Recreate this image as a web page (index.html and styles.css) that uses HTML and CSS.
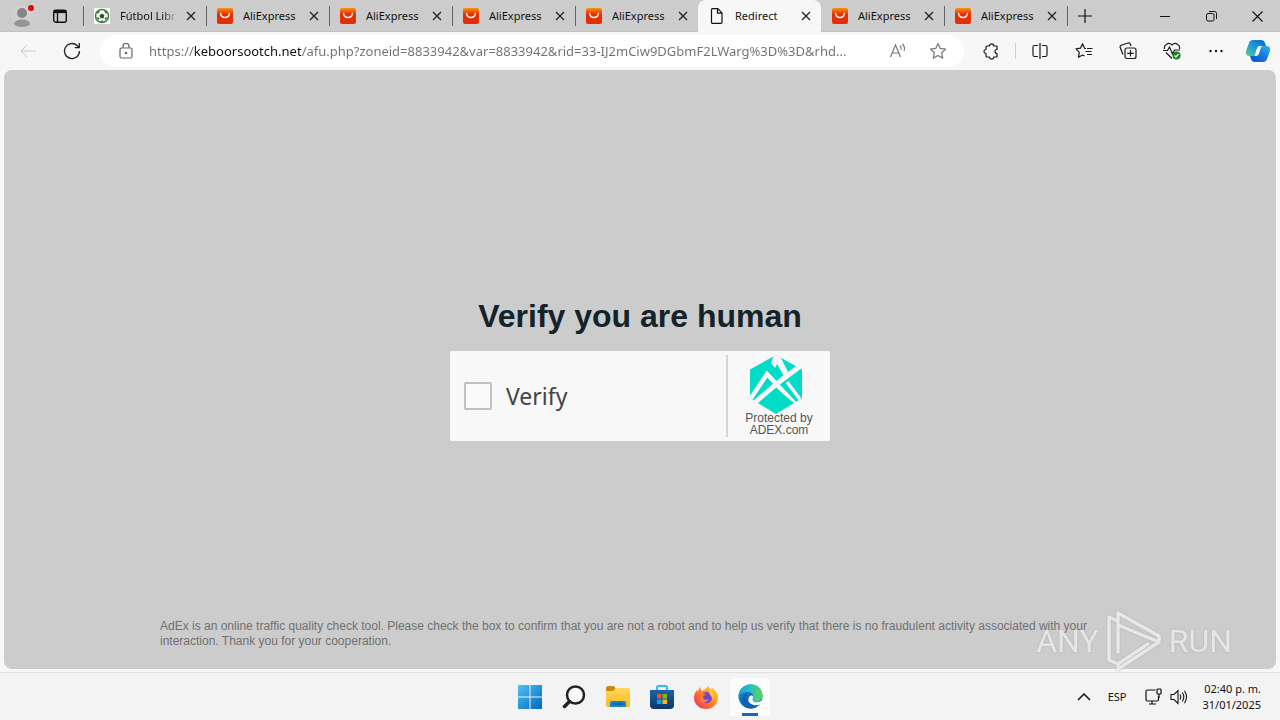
FILE: index.html
```html
<!DOCTYPE html>
<html lang="en">
<head>
<meta charset="utf-8">
<title>Redirect</title>
<link rel="stylesheet" href="styles.css">
</head>
<body>
<svg class="defs" aria-hidden="true">
  <defs>
    <linearGradient id="aliTop" x1="0" y1="0" x2="0" y2="1"><stop offset="0" stop-color="#f5960f"/><stop offset=".25" stop-color="#f0500a"/><stop offset=".4" stop-color="#e62e04"/></linearGradient>
    <linearGradient id="win" x1="0" y1="0" x2="1" y2="1"><stop offset="0" stop-color="#4fc3f5"/><stop offset="1" stop-color="#0067c0"/></linearGradient>
    <linearGradient id="folder" x1="0" y1="0" x2="0" y2="1"><stop offset="0" stop-color="#ffd75e"/><stop offset="1" stop-color="#f8b91c"/></linearGradient>
    <linearGradient id="store" x1="0" y1="0" x2="0" y2="1"><stop offset="0" stop-color="#1766a8"/><stop offset="1" stop-color="#0d3568"/></linearGradient>
    <linearGradient id="fox" x1="1" y1="0" x2="0" y2="1"><stop offset="0" stop-color="#ffe03a"/><stop offset=".45" stop-color="#ff8a1e"/><stop offset="1" stop-color="#f0246a"/></linearGradient>
    <linearGradient id="edgeTop" x1="0" y1="0" x2="1" y2="0"><stop offset="0" stop-color="#1b9de2"/><stop offset=".5" stop-color="#2bbfc4"/><stop offset="1" stop-color="#62d84e"/></linearGradient>
    <linearGradient id="edgeLow" x1="0" y1="0" x2="1" y2="1"><stop offset="0" stop-color="#1a8fdc"/><stop offset="1" stop-color="#0b4a8f"/></linearGradient>
    <linearGradient id="copA" x1="1" y1="0" x2="0" y2="1"><stop offset="0" stop-color="#0c5fc4"/><stop offset=".45" stop-color="#1b93e0"/><stop offset="1" stop-color="#4ed08c"/></linearGradient>
    <linearGradient id="copB" x1="1" y1="0" x2="0" y2="1"><stop offset="0" stop-color="#2fb4f0"/><stop offset=".5" stop-color="#1577e0"/><stop offset="1" stop-color="#0a4fc4"/></linearGradient>
    <symbol id="ali" viewBox="0 0 16 16"><rect width="16" height="16" rx="2" fill="url(#aliTop)"/><path d="M3.600 5.400c.6 5.400 8.200 5.400 8.800 0" fill="none" stroke="#fff" stroke-width="1.400" stroke-linecap="round"/></symbol>
    <symbol id="x" viewBox="0 0 10 10"><path d="M1 1l8 8M9 1L1 9" fill="none" stroke="#222" stroke-width="1.300"/></symbol>
  </defs>
</svg>

<header class="tabstrip">
  <button class="strip-btn profile" aria-label="Profile"><svg width="28" height="28" viewBox="0 0 28 28"><circle cx="14" cy="14" r="11" fill="#d1cfcf"/><circle cx="14" cy="11" r="5" fill="#858585"/><path d="M6 22c0-6 16-6 16 0-2 4-14 4-16 0z" fill="#969696"/><circle cx="23" cy="6" r="3" fill="#d90b0b"/></svg></button>
  <button class="strip-btn workspace" aria-label="Tab actions"><svg width="16" height="16" viewBox="0 0 16 16" fill="none" stroke="#111" stroke-width="1.400"><rect x="1.700" y="2.200" width="12.600" height="12" rx="2"/><path d="M2 3.800h12" stroke-width="2.600"/><path d="M5.500 5v9"/></svg></button>
  <nav class="tabs" aria-label="Tabs">
    <div class="tab"><svg class="fav" viewBox="0 0 16 16"><path fill="#f7fff2" d="M0 0h16v16H0z"/><circle cx="8" cy="8" r="6.500" fill="#fff" stroke="#3c8b35" stroke-width="1.600"/><path d="M8 5.500l2.500 1.800-.9 2.900H6.400l-.9-2.900zM3 4l3-1-2 3zM13 4l-3-1 2 3zM2.500 9l2 3 1-2zM13.500 9l-2 3-1-2zM6.500 14h3L8 12z" fill="#344b32"/></svg><a href="#" class="title fade">Fútbol Libr</a><button class="close" aria-label="Close tab"><svg width="10" height="10"><use href="#x"/></svg></button></div>
    <div class="tab"><svg class="fav"><use href="#ali"/></svg><a href="#" class="title">AliExpress</a><button class="close" aria-label="Close tab"><svg width="10" height="10"><use href="#x"/></svg></button></div>
    <div class="tab"><svg class="fav"><use href="#ali"/></svg><a href="#" class="title">AliExpress</a><button class="close" aria-label="Close tab"><svg width="10" height="10"><use href="#x"/></svg></button></div>
    <div class="tab"><svg class="fav"><use href="#ali"/></svg><a href="#" class="title">AliExpress</a><button class="close" aria-label="Close tab"><svg width="10" height="10"><use href="#x"/></svg></button></div>
    <div class="tab"><svg class="fav"><use href="#ali"/></svg><a href="#" class="title">AliExpress</a><button class="close" aria-label="Close tab"><svg width="10" height="10"><use href="#x"/></svg></button></div>
    <div class="tab active"><svg class="fav" viewBox="0 0 16 16"><path d="M3.500.7h5.300l4.200 4.200v9.400q0 1-1 1H3.500q-1 0-1-1V1.700q0-1 1-1zM8.500 1v4.200H13" fill="none" stroke="#111" stroke-width="1.200"/></svg><a href="#" class="title">Redirect</a><button class="close" aria-label="Close tab"><svg width="10" height="10"><use href="#x"/></svg></button></div>
    <div class="tab after"><svg class="fav"><use href="#ali"/></svg><a href="#" class="title">AliExpress</a><button class="close" aria-label="Close tab"><svg width="10" height="10"><use href="#x"/></svg></button></div>
    <div class="tab"><svg class="fav"><use href="#ali"/></svg><a href="#" class="title">AliExpress</a><button class="close" aria-label="Close tab"><svg width="10" height="10"><use href="#x"/></svg></button></div>
    <button class="newtab" aria-label="New tab"><svg width="14" height="14" viewBox="0 0 14 14"><path d="M7 0v14M0 7h14" stroke="#111" stroke-width="1.200"/></svg></button>
  </nav>
  <div class="window-btns">
    <button aria-label="Minimize"><svg width="10" height="10"><path d="M0 5.500h10" stroke="#111"/></svg></button>
    <button aria-label="Restore"><svg width="11" height="11" fill="none" stroke="#111"><rect x=".5" y="2.500" width="7.500" height="7.500" rx="1.500"/><path d="M3 .5h5.500q2 0 2 2V8"/></svg></button>
    <button aria-label="Close"><svg width="11" height="11"><path d="M.5.500l10 10M10.500.5l-10 10" stroke="#111" stroke-width="1.100"/></svg></button>
  </div>
</header>

<div class="toolbar">
  <button aria-label="Back"><svg width="16" height="14" viewBox="0 0 16 14" fill="none" stroke="#c8c8c8"><path d="M16 7H1M7 1L1 7l6 6"/></svg></button>
  <button aria-label="Refresh"><svg width="18" height="18" viewBox="0 0 18 18" fill="none" stroke="#222" stroke-width="1.300"><path d="M16.500 9A7.500 7.500 0 1 1 14.300 3.700L16 5.500M16.300 1v4.700h-4.600"/></svg></button>
  <form class="address">
    <svg width="14" height="17" viewBox="0 0 14 17" fill="none" stroke="#666" stroke-width="1.200"><rect x="1" y="5" width="12" height="10" rx="1.500"/><path d="M4 5V3.500a3 3 0 0 1 6 0V5"/><circle cx="7" cy="10" r=".7" fill="#666"/></svg>
    <input type="text" aria-label="Address" value="https://keboorsootch.net/afu.php?zoneid=8833942&amp;var=8833942&amp;rid=33-IJ2mCiw9DGbmF2LWarg%3D%3D&amp;rhd...">
    <button type="button" aria-label="Read aloud"><svg width="18" height="16" viewBox="0 0 18 16" fill="none" stroke="#777" stroke-width="1.200"><path d="M1.500 14L6.500 2l5 12M3.300 10h6.400M11 2.500q2 2 1 4.500M13.500 1q3 3.200 1.500 7"/></svg></button>
    <button type="button" aria-label="Add to favorites"><svg width="18" height="18" viewBox="0 0 18 18" fill="none" stroke="#777" stroke-width="1.200" stroke-linejoin="round"><path d="M9 1.500l2.300 4.900 5.300.7-3.900 3.700 1 5.300L9 13.500l-4.700 2.600 1-5.300L1.400 7.100l5.300-.7z"/></svg></button>
  </form>
  <button aria-label="Extensions"><svg width="17" height="17" viewBox="0 0 17 17" fill="none" stroke="#1a1a1a" stroke-width="1.200" stroke-linejoin="round"><path d="M4 3h2.500a2.100 2.100 0 0 1 4.200 0H14v3.500a2 2 0 1 0 0 4V14h-3.300a2.100 2.100 0 0 1-4.200 0H4q-1 0-1-1v-2.500a2 2 0 1 1 0-4V4q0-1 1-1z"/></svg></button>
  <span class="rule"></span>
  <button aria-label="Split screen"><svg width="16" height="16" viewBox="0 0 16 16" fill="none" stroke="#1a1a1a" stroke-width="1.200"><path d="M6 2.500H2.500q-1.500 0-1.500 1.500v8q0 1.500 1.500 1.500H6M10 2.500h3.500q1.500 0 1.500 1.500v8q0 1.500-1.500 1.500H10M8 0v16"/></svg></button>
  <button aria-label="Favorites"><svg width="18" height="18" viewBox="0 0 18 18" fill="none" stroke="#1a1a1a" stroke-width="1.200" stroke-linejoin="round"><path d="M11 6.500H9.700L7.500 1.700 5.500 6.200l-4.500.7 3.300 3.400-.9 5L7.600 13l2 1M12 6.500h5.500M10.500 9.500h6M12 12.500h5"/></svg></button>
  <button aria-label="Collections"><svg width="18" height="18" viewBox="0 0 18 18" fill="none" stroke="#1a1a1a" stroke-width="1.200"><rect x="6" y="6" width="11" height="10.500" rx="2"/><path d="M11.500 8v6.500M8.200 11.300h6.600M4 12.500l-2.800-7q-.5-1.700 1-2.300L9 1q1.700-.5 2.300 1l.7 2"/></svg></button>
  <button aria-label="Browser essentials"><svg width="18" height="18" viewBox="0 0 18 18" fill="none" stroke="#1a1a1a" stroke-width="1.200"><path d="M1.500 7C.5 3 5.500-.5 9 3c3.500-3.500 8.500 0 7.500 4M3 10.500l6 6M0 8.500h4.500l2-3.500 3 7 2-4h5.500"/><circle cx="13.500" cy="13.500" r="4" fill="#16801c" stroke="none"/><path d="M11.500 13.500l1.500 1.500 2.500-3" stroke="#fff"/></svg></button>
  <button aria-label="Settings and more"><svg width="16" height="4" viewBox="0 0 16 4" fill="#1a1a1a"><circle cx="2.500" cy="2" r="1.200"/><circle cx="8" cy="2" r="1.200"/><circle cx="13.500" cy="2" r="1.200"/></svg></button>
  <button class="copilot" aria-label="Copilot"><svg width="26" height="24" viewBox="0 0 26 24"><path d="M8 1h8q3 0 4 3l1 3h-5l-4 10H5Q0 17 1 12L4 4q1-3 4-3z" fill="url(#copA)"/><path d="M18 23h-8q-3 0-4-3l-1-3h5l4-10h7q5 0 4 5l-3 8q-1 3-4 3z" fill="url(#copB)"/><path d="M16 7h-1.500q-2 0-3 3.500L9.500 17h2q2 0 2.800-3l1.500-5q.5-1.500 1.700-2z" fill="#f4faff"/></svg></button>
</div>

<main class="page">
  <section class="verify">
    <h1>Verify you are human</h1>
    <div class="box">
      <label class="check"><input type="checkbox"><span>Verify</span></label>
      <div class="brand">
        <svg width="54" height="60" viewBox="0 0 54 60"><path d="M27 0l26 14.500v29L27 58 1 43.500v-29z" fill="#00dcc8"/><path d="M0 43l27 16 27-16v17H0z" fill="#f8f8f8"/><g fill="none" stroke="#f8f8f8"><path d="M0 46L18 19l29 31" stroke-width="4.500"/><path d="M2 51L30 27 54 9" stroke-width="5"/><path d="M38 27l15 20" stroke-width="3.500"/></g><path d="M9 48l18-15 18 15-18 11z" fill="#00dcc8"/><path d="M25 0l-3 8 4 5 2-4 7 12 4-4L31 1z" fill="#f8f8f8"/></svg>
        <p>Protected by<br>ADEX.com</p>
      </div>
    </div>
  </section>
  <p class="notice">AdEx is an online traffic quality check tool. Please check the box to confirm that you are not a robot and to help us verify that there is no fraudulent activity associated with your interaction. Thank you for your cooperation.</p>
</main>

<div class="watermark"><span>ANY</span><svg width="58" height="62" viewBox="0 0 58 62" fill="none" stroke="#ededed" stroke-width="3.500" stroke-linejoin="round" stroke-linecap="round"><path d="M13 42V3l41 23v4M13 15l41 17L13 59v-5M13 11L4 7v43l9 4 30-20"/></svg><span>RUN</span></div>

<footer class="taskbar">
  <nav class="apps" aria-label="Taskbar">
    <button aria-label="Start"><svg width="24" height="24" viewBox="0 0 24 24" fill="url(#win)"><path d="M0 0h11.500v11.500H0zM12.500 0H24v11.500H12.500zM0 12.500h11.500V24H0zM12.500 12.500H24V24H12.500z"/></svg></button>
    <button aria-label="Search"><svg width="24" height="24" viewBox="0 0 24 24" fill="none" stroke="#222"><circle cx="13.500" cy="10" r="8.500" stroke-width="2.500" fill="#fafafa"/><path d="M7.500 16.500L2.500 21.500" stroke-width="3.500" stroke-linecap="round"/></svg></button>
    <button aria-label="File Explorer"><svg width="26" height="24" viewBox="0 0 26 24"><path d="M1 3q0-2 2-2h6l2 3v6H1z" fill="#c98b12"/><path d="M1 6h7l3-3h12q2 0 2 2v15q0 2-2 2H3q-2 0-2-2z" fill="url(#folder)"/><path d="M5 22v-4q0-2 2-2h12q2 0 2 2v4z" fill="#1683cf"/><path d="M8 19h10" stroke="#0a5b9e" stroke-width="1.500"/></svg></button>
    <button aria-label="Microsoft Store"><svg width="24" height="24" viewBox="0 0 24 24"><path d="M7 6V2.500Q7 1 8.500 1h7Q17 1 17 2.500V6" fill="none" stroke="#35b9ec" stroke-width="2"/><path d="M0 5h24v15q0 4-4 4H4q-4 0-4-4z" fill="url(#store)"/><path d="M7 9h4.500v4.500H7z" fill="#f25022"/><path d="M12.500 9H17v4.500h-4.500z" fill="#7fba00"/><path d="M7 14.500h4.500V19H7z" fill="#00a4ef"/><path d="M12.500 14.500H17V19h-4.500z" fill="#ffb900"/></svg></button>
    <button aria-label="Firefox"><svg width="24" height="24" viewBox="0 0 24 24"><path d="M14 1q2 2 3 4 1-1 1-2 6 4 6 10a12 11 0 0 1-24 0q0-5 3-8l.5 2L6 2l1.500 4q4-1 6.500-5z" fill="url(#fox)"/><circle cx="12.500" cy="12.500" r="5.500" fill="#7541d5"/><path d="M5 9q5-2 7 1-3 0-3 3 2 3 6 1-3 6-9 2z" fill="#ff7a36"/><path d="M14 2q2 4 1 6l4 6q3-7-5-12z" fill="#ffc630"/></svg></button>
    <button class="running" aria-label="Microsoft Edge"><svg width="25" height="25" viewBox="0 0 25 25"><circle cx="12.500" cy="12.500" r="12" fill="url(#edgeLow)"/><path d="M.5 12C2-3 24-4 24.500 12c0 5-5 7-9 5.500-2-1-1.500-2-.5-3.500 1-4-2-6-5-6-5 0-9 2-9.500 5z" fill="url(#edgeTop)"/><path d="M10 9q-5 5 1 11 4 4 10 1-5 5-11 3-7-3-6-9 1-5 6-6z" fill="#0c62b0"/><path d="M15 13.500q-1.500 3 1.500 4.500 4 1 8-2l-2 4q-4 2-7 1-7-2-4.500-8 1-2 3-1.500 1.500.5 1 2z" fill="#fcfcfc"/></svg></button>
  </nav>
  <div class="tray">
    <button aria-label="Show hidden icons"><svg width="14" height="8" viewBox="0 0 14 8" fill="none" stroke="#111" stroke-width="1.500"><path d="M1 7l6-6 6 6"/></svg></button>
    <button class="lang">ESP</button>
    <button class="status" aria-label="Network and volume"><svg width="17" height="17" viewBox="0 0 17 17" fill="none" stroke="#111" stroke-width="1.200"><path d="M10.500 2H2.500Q1 2 1 3.500v8Q1 13 2.500 13h9.500q1.500 0 1.500-1.500V8M7 13v3M4 16h7M14 6v4"/><rect x="12" y="1" width="4" height="5" rx=".8"/></svg><svg width="18" height="16" viewBox="0 0 18 16" fill="none" stroke="#111" stroke-width="1.100"><path d="M1 5.500h3l4-4v13l-4-4H1zM10 5.500q1.500 2.500 0 5M12.300 3.500q3 4.500 0 9M14.500 1.800q4 6.200 0 12.400"/></svg></button>
    <button class="clock">02:40 p. m.<br>31/01/2025</button>
  </div>
</footer>
</body>
</html>
```
FILE: styles.css
```css
* { box-sizing: border-box; }
body {
  margin: 0;
  min-height: 100vh;
  display: flex;
  flex-direction: column;
  background: #f7f7f7;
  font-family: "Noto Sans", "Open Sans", sans-serif;
  position: relative;
}
.defs { position: absolute; width: 0; height: 0; }
button {
  border: 0;
  padding: 0;
  margin: 0;
  background: none;
  font: inherit;
  color: inherit;
  display: flex;
  align-items: center;
  justify-content: center;
}
svg { display: block; flex: none; }

.tabstrip {
  display: flex;
  height: 32px;
  background: #ccc;
  box-shadow: inset 0 -1px #c0c0c0;
}
.strip-btn { width: 38px; }
.profile { margin-left: 3px; }
.workspace { margin-right: 4px; }
.tabs { display: flex; flex: 1; min-width: 0; }
.tab {
  flex: 0 1 123px;
  display: flex;
  align-items: center;
  padding: 0 10px 0 11px;
  min-width: 0;
  background: linear-gradient(#666, #666) 0 50% / 1px 20px no-repeat;
}
.tab.active {
  background: #f7f7f7;
  border-radius: 8px 8px 0 0;
}
.tab.after { background: none; }
.fav { width: 16px; height: 16px; margin-right: 10px; }
.title {
  flex: 1;
  min-width: 0;
  overflow: hidden;
  white-space: nowrap;
  font-size: 11px;
  line-height: 16px;
  color: #111;
  text-decoration: none;
}
.fade {
  -webkit-mask-image: linear-gradient(90deg, #000 75%, transparent 100%);
  mask-image: linear-gradient(90deg, #000 75%, transparent 100%);
}
.close { width: 10px; height: 20px; margin: 0 0 0 9px; }
.newtab {
  width: 36px;
  background: linear-gradient(#666, #666) 0 50% / 1px 20px no-repeat;
}
.window-btns { display: flex; }
.window-btns button { width: 46px; }

.toolbar {
  display: flex;
  align-items: center;
  height: 38px;
  padding: 0 2px 0 6px;
}
.toolbar > button { width: 44px; height: 32px; }
.toolbar > .copilot { width: 40px; }
.address {
  flex: 1;
  min-width: 0;
  display: flex;
  align-items: center;
  height: 32px;
  margin: 0 5px 0 6px;
  padding: 0 6px 0 19px;
  border-radius: 16px;
  background: #fff;
}
.address input {
  flex: 1;
  min-width: 0;
  margin: 0 0 0 16px;
  padding: 0;
  border: 0;
  outline: 0;
  font: 13px/20px "Noto Sans", "Open Sans", sans-serif;
  color: transparent;
  background: linear-gradient(90deg, #707070 45px, #111 45px, #111 152px, #707070 152px);
  -webkit-background-clip: text;
  background-clip: text;
}
.address button { width: 40px; height: 28px; }
.rule { width: 1px; height: 16px; margin: 0 2px; background: #d0d0d0; }

.page {
  flex: 1;
  margin: 0 4px;
  padding: 0 20px 2px;
  display: grid;
  grid-template-rows: 1fr auto 1fr;
  justify-items: center;
  border-radius: 8px;
  background: #ccc;
  font-family: "Liberation Sans", Arial, sans-serif;
}
.verify { grid-row: 2; width: 100%; max-width: 380px; }
h1 {
  margin: 0 0 16px;
  font-size: 32px;
  line-height: 38px;
  text-align: center;
  white-space: nowrap;
  color: #14232a;
}
.box {
  display: flex;
  align-items: stretch;
  height: 90px;
  padding: 4px 0;
  background: #f8f8f8;
}
.check {
  flex: 1;
  display: flex;
  align-items: center;
  gap: 14px;
  padding-left: 14px;
  border-right: 2px solid #d4d4d4;
  font: 23px/32px "Noto Sans", "Open Sans", sans-serif;
  color: #444;
}
.check input {
  appearance: none;
  width: 28px;
  height: 28px;
  margin: 0;
  border: 2px solid #c1c1c1;
  border-radius: 2px;
  background: #fafafa;
}
.brand {
  width: 102px;
  display: flex;
  flex-direction: column;
  align-items: center;
}
.brand svg { margin-right: 6px; }
.brand p {
  margin: -3px 0 0;
  font-size: 12px;
  line-height: 12px;
  text-align: center;
  color: #555;
}
.notice {
  grid-row: 3;
  align-self: end;
  width: 100%;
  max-width: 960px;
  margin: 0 0 18px;
  font-size: 12px;
  line-height: 15px;
  color: #707070;
}

.watermark {
  position: absolute;
  right: 48px;
  bottom: 48px;
  display: flex;
  align-items: center;
  gap: 6px;
  font: 32px/62px Roboto, "Liberation Sans", sans-serif;
  color: #ebebeb;
  opacity: .85;
  filter: drop-shadow(0 0 1px #aaa);
  pointer-events: none;
}

.taskbar {
  display: grid;
  grid-template-columns: 1fr auto 1fr;
  align-items: center;
  height: 48px;
  margin-top: 3px;
  background: #f3f3f3;
  border-top: 1px solid #e2e2e2;
}
.apps { grid-column: 2; display: flex; gap: 4px; }
.apps button { width: 40px; height: 38px; border-radius: 4px; }
.apps .running {
  background: linear-gradient(#0f6cbd, #0f6cbd) 50% 100% / 16px 3px no-repeat, #fcfcfc;
}
.tray {
  display: flex;
  justify-content: flex-end;
  padding-right: 19px;
  font-size: 11px;
  line-height: 16px;
  color: #111;
}
.lang { margin-left: 17px; }
.status { gap: 8px; margin: 0 14px 0 19px; }
.clock { display: block; text-align: right; }
```
